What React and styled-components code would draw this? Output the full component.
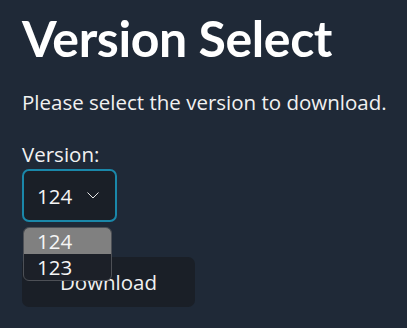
import React from "react";
import styled, { createGlobalStyle } from "styled-components";

const Global = createGlobalStyle`
  html, body { margin: 0; padding: 0; background: #1f2937; }
  body {
    color: #f3f4f6;
    font-family: "Open Sans", "Noto Sans", sans-serif;
    -webkit-font-smoothing: antialiased;
  }
`;

const Page = styled.main`
  display: flex;
  flex-direction: column;
  align-items: flex-start;
  padding: 8px 22px 0;
  min-height: 328px;
  box-sizing: border-box;
`;

const Title = styled.h1`
  margin: 0;
  font-family: "Lato", "Open Sans", sans-serif;
  font-size: 50px;
  line-height: 60px;
  font-weight: 700;
  letter-spacing: -0.4px;
  color: #ffffff;
`;

const Text = styled.p`
  margin: ${(p) => p.$top || 0}px 0 0;
  font-size: 20.5px;
  line-height: 30px;
  white-space: nowrap;
  color: #f1f1f1;
`;

const Field = styled.div`
  position: relative;
`;

const SelectBox = styled.div`
  box-sizing: border-box;
  width: 95px;
  height: 53px;
  border: 2px solid #1a87a9;
  border-radius: 7px;
  background: #1a1f27;
  display: flex;
  align-items: center;
  gap: 15px;
  padding: 0 0 0 13px;
  font-size: 20.5px;
  color: #f5f5f5;
`;

const Chevron = () => (
  <svg width="12" height="7" viewBox="0 0 12 7" fill="none">
    <path d="M0.5 0.5 L6 6 L11.5 0.5" stroke="#e8e8e8" strokeWidth="1" />
  </svg>
);

const Menu = styled.ul`
  position: absolute;
  top: 58px;
  left: 1px;
  width: 89px;
  box-sizing: border-box;
  margin: 0;
  padding: 0;
  list-style: none;
  border: 1.5px solid #4d5056;
  border-radius: 6px;
  overflow: hidden;
  background: #1c2028;
  z-index: 2;
`;

const Option = styled.li`
  height: 26px;
  line-height: 26px;
  padding-left: 13px;
  font-size: 20.5px;
  color: #f5f5f5;
  background: ${(p) => (p.$active ? "#808080" : "transparent")};
`;

const Button = styled.button`
  margin-top: 35px;
  width: 173px;
  height: 50px;
  border: none;
  border-radius: 7px;
  background: #1a1f27;
  color: #f1f1f1;
  font-family: inherit;
  font-size: 20.5px;
  cursor: pointer;
`;

export default function App() {
  return (
    <>
      <Global />
      <Page>
        <Title>Version Select</Title>
        <Text $top={19}>Please select the version to download.</Text>
        <Text $top={22}>Version:</Text>
        <Field>
          <SelectBox>
            <span>124</span>
            <Chevron />
          </SelectBox>
          <Menu>
            <Option $active>124</Option>
            <Option>123</Option>
          </Menu>
        </Field>
        <Button>Download</Button>
      </Page>
    </>
  );
}
